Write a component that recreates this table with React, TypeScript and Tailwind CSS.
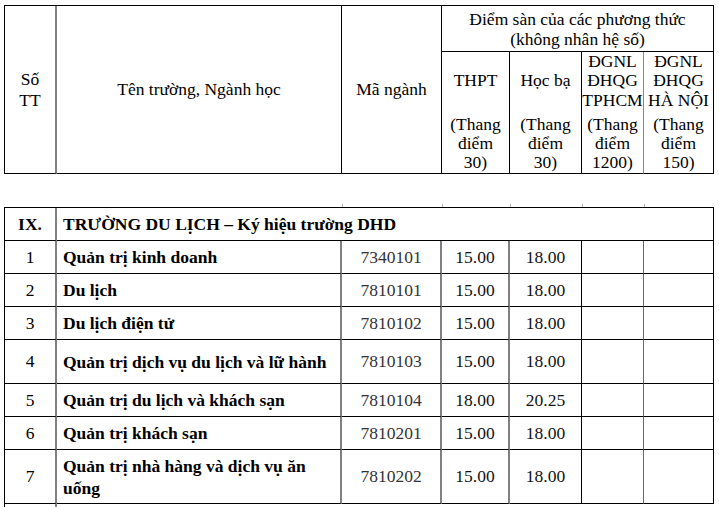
const GRAY = "border-[#808080]";

type Row = { stt: string; ten: string; ma: string; thpt: string; hocba: string; h: string };

const ROWS: Row[] = [
  { stt: "1", ten: "Quản trị kinh doanh", ma: "7340101", thpt: "15.00", hocba: "18.00", h: "h-[33px]" },
  { stt: "2", ten: "Du lịch", ma: "7810101", thpt: "15.00", hocba: "18.00", h: "h-[33px]" },
  { stt: "3", ten: "Du lịch điện tử", ma: "7810102", thpt: "15.00", hocba: "18.00", h: "h-[33px]" },
  { stt: "4", ten: "Quản trị dịch vụ du lịch và lữ hành", ma: "7810103", thpt: "15.00", hocba: "18.00", h: "h-[44px]" },
  { stt: "5", ten: "Quản trị du lịch và khách sạn", ma: "7810104", thpt: "18.00", hocba: "20.25", h: "h-[33px]" },
  { stt: "6", ten: "Quản trị khách sạn", ma: "7810201", thpt: "15.00", hocba: "18.00", h: "h-[33px]" },
  { stt: "7", ten: "Quản trị nhà hàng và dịch vụ ăn uống", ma: "7810202", thpt: "15.00", hocba: "18.00", h: "h-[54px]" },
];

function SubHead({ top, bottom, gray }: { top: string[]; bottom: string[]; gray?: boolean }) {
  return (
    <div className={`flex flex-col justify-between h-full border-b border-b-black border-r ${gray ? "border-r-[#8a8a8a]" : "border-r-black"}`}>
      <div className="h-[58px] flex flex-col items-center justify-center leading-[19.5px]">
        {top.map(t => <span key={t} className="whitespace-nowrap">{t}</span>)}
      </div>
      <div className="flex flex-col items-center leading-[19px] pb-[1px]">
        {bottom.map(t => <span key={t}>{t}</span>)}
      </div>
    </div>
  );
}

export default function App() {
  return (
    <div className="w-[719px] h-[507px] bg-white text-black text-[17.5px] font-['Liberation_Serif',serif] pt-[5px] pl-[4px] overflow-hidden">
      {/* header table */}
      <div className="flex w-[710px] h-[169px] border-t border-l border-black">
        <div className={`w-[52px] flex flex-col items-center justify-center leading-[21px] border-r-2 ${GRAY} border-b border-b-black`}>
          <span>Số</span>
          <span>TT</span>
        </div>
        <div className="w-[285px] flex items-center justify-center border-r border-b border-black">Tên trường, Ngành học</div>
        <div className="w-[100px] flex items-center justify-center border-r border-b border-black">Mã ngành</div>
        <div className="w-[272px] flex flex-col">
          <div className="h-[46px] flex flex-col items-center justify-center leading-[20px] border-r border-b border-black">
            <span>Điểm sàn của các phương thức</span>
            <span>(không nhân hệ số)</span>
          </div>
          <div className="flex-1 grid grid-cols-[68px_72px_62px_70px]">
            <SubHead top={["THPT"]} bottom={["(Thang", "điểm", "30)"]} />
            <SubHead top={["Học bạ"]} bottom={["(Thang", "điểm", "30)"]} />
            <SubHead top={["ĐGNL", "ĐHQG", "TPHCM"]} bottom={["(Thang", "điểm", "1200)"]} gray />
            <SubHead top={["ĐGNL", "ĐHQG", "HÀ NỘI"]} bottom={["(Thang", "điểm", "150)"]} />
          </div>
        </div>
      </div>

      {/* gap with stubs */}
      <div className="h-[30px]" />
      <div className="flex h-[3px] w-[710px]">
        <div className="w-[338px]" />
        <div className="w-[100px] border-l border-[#b0b0b0]" />
        <div className="w-[68px] border-l border-[#b0b0b0]" />
        <div className="w-[72px] border-l border-[#b0b0b0]" />
        <div className="w-[62px] border-l border-[#b0b0b0]" />
        <div className="w-[70px] border-l border-[#b0b0b0]" />
      </div>

      {/* body table */}
      <div className="w-[710px] border-t border-l border-black">
        <div className="flex h-[33px]">
          <div className={`w-[52px] flex items-center justify-center font-bold border-r-2 ${GRAY} border-b border-b-black`}>IX.</div>
          <div className="w-[657px] flex items-center pl-[6px] font-bold border-r border-b border-black">
            TRƯỜNG DU LỊCH – Ký hiệu trường DHD
          </div>
        </div>
        {ROWS.map(r => (
          <div key={r.stt} className={`flex ${r.h}`}>
            <div className={`w-[52px] flex items-center justify-center border-r-2 ${GRAY} border-b border-b-black`}>{r.stt}</div>
            <div className={`w-[285px] flex items-center pl-[6px] pr-[12px] font-bold leading-[22px] border-r-2 ${GRAY} border-b border-b-black`}>{r.ten}</div>
            <div className={`w-[100px] flex items-center justify-center text-[#333] border-r-2 ${GRAY} border-b border-b-black`}>{r.ma}</div>
            <div className={`w-[68px] flex items-center justify-center text-[#111] border-r-2 ${GRAY} border-b border-b-black`}>{r.thpt}</div>
            <div className="w-[72px] flex items-center justify-center text-[#111] border-r border-b border-black">{r.hocba}</div>
            <div className="w-[62px] border-r border-r-[#6a6a6a] border-b border-b-black" />
            <div className="w-[70px] border-r border-b border-black" />
          </div>
        ))}
        <div className="flex h-[4px]">
          <div className={`w-[52px] border-r-2 ${GRAY}`} />
        </div>
      </div>
    </div>
  );
}
